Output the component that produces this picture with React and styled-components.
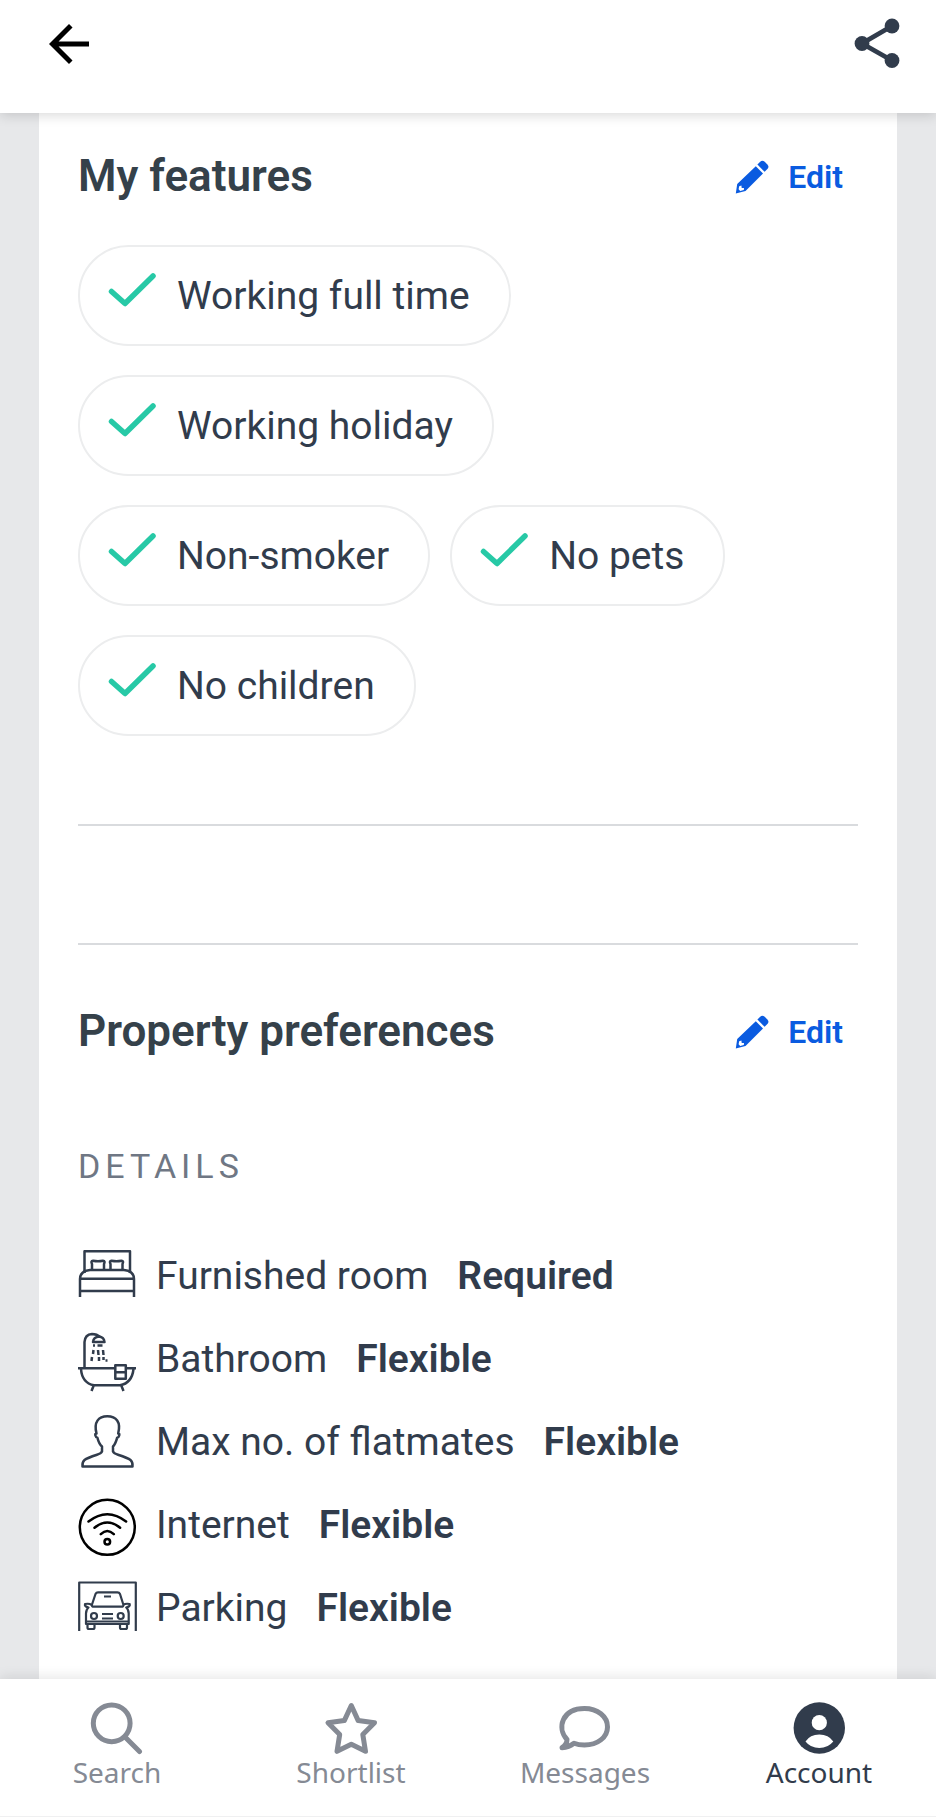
import React from "react";
import styled, { createGlobalStyle } from "styled-components";
import { MdArrowBack } from "react-icons/md";

const color = {
  ink: "#313c4c",
  heading: "#35414a",
  muted: "#6f7784",
  nav: "#858a94",
  link: "#0a5be0",
  check: "#27c9a6",
  line: "#d9dbde",
  pill: "#ecedee",
  gutter: "#e7e8ea",
};

const GlobalStyle = createGlobalStyle`
  *, *::before, *::after { box-sizing: border-box; }
  body {
    margin: 0;
    background: ${color.gutter};
    color: ${color.ink};
    font-family: Roboto, "Liberation Sans", sans-serif;
  }
  h2, h3, ul, dl, dd { margin: 0; padding: 0; }
  ul { list-style: none; }
  svg { display: block; flex: none; }
`;

const Page = styled.div`
  display: flex;
  flex-direction: column;
  min-height: 100vh;
`;

const TopBar = styled.header`
  position: relative;
  z-index: 1;
  display: flex;
  justify-content: space-between;
  align-items: flex-start;
  height: 113px;
  padding: 14px 29px 0 39px;
  background: #fff;
  box-shadow: 0 2px 12px rgba(0, 0, 0, 0.16);
`;

const IconButton = styled.button`
  padding: 0;
  border: 0;
  background: none;
  color: ${(p) => p.$color};
  font-size: 60px;
  cursor: pointer;
`;

const Card = styled.main`
  flex: 1;
  margin: 0 39px;
  padding: 0 39px 37px;
  background: #fff;
`;

const SectionHead = styled.div`
  display: flex;
  justify-content: space-between;
  align-items: center;
  padding: ${(p) => p.$top}px 15px 0 0;
`;

const Heading = styled.h2`
  color: ${color.heading};
  font-size: 44px;
  font-weight: 600;
  line-height: 52px;
`;

const EditButton = styled.button`
  display: flex;
  align-items: center;
  gap: 19px;
  padding: 2px 0 0;
  border: 0;
  background: none;
  color: ${color.link};
  font: 600 32px/50px Roboto, "Liberation Sans", sans-serif;
  cursor: pointer;
`;

const Pills = styled.ul`
  display: flex;
  flex-wrap: wrap;
  gap: 29px 20px;
  max-width: 660px;
  padding: 43px 0 88px;
`;

const Pill = styled.li`
  display: flex;
  align-items: center;
  gap: 19px;
  height: 101px;
  padding: 0 39px 0 28px;
  border: 2px solid ${color.pill};
  border-radius: 51px;
  font-size: 39px;
`;

const Divider = styled.hr`
  height: 2px;
  margin: 0 0 ${(p) => p.$after}px;
  border: 0;
  background: ${color.line};
`;

const Overline = styled.h3`
  padding: 89px 0 63px;
  color: ${color.muted};
  font-size: 34px;
  font-weight: 400;
  line-height: 40px;
  letter-spacing: 5px;
`;

const Details = styled.dl`
  display: flex;
  flex-direction: column;
  gap: 23px;
`;

const Detail = styled.div`
  display: flex;
  align-items: flex-start;
  font-size: 39px;
  line-height: 54px;

  dt { margin: 0 29px 0 18px; }
  dd { font-weight: 600; }
`;

const TabBar = styled.nav`
  position: relative;
  z-index: 1;
  display: grid;
  grid-template-columns: repeat(4, 1fr);
  border-bottom: 1px solid #f0f0f1;
  background: #fff;
  box-shadow: 0 -2px 12px rgba(0, 0, 0, 0.1);
`;

const Tab = styled.a`
  display: flex;
  flex-direction: column;
  align-items: center;
  padding: 22px 0 27px;
  color: ${(p) => (p.$active ? color.ink : color.nav)};
  font-family: "Noto Sans", "DejaVu Sans", sans-serif;
  font-size: 28px;
  line-height: 34px;
  text-decoration: none;
`;

const Line = ({ size = 60, width = 2.5, stroke = "currentColor", children }) => (
  <svg
    width={size}
    height={size}
    viewBox={`0 0 ${size} ${size}`}
    fill="none"
    stroke={stroke}
    strokeWidth={width}
    strokeLinejoin="round"
    aria-hidden="true"
  >
    {children}
  </svg>
);

const ShareIcon = () => (
  <svg width="60" height="60" viewBox="0 0 60 60" fill="currentColor" aria-hidden="true">
    <path d="M45 12 15 29.500 45 46.500" fill="none" stroke="currentColor" strokeWidth="4.800" />
    <circle cx="15" cy="29.500" r="7.400" />
    <circle cx="45" cy="12" r="7.400" />
    <circle cx="45" cy="46.500" r="7.400" />
  </svg>
);

const Pencil = () => (
  <svg width="34" height="34" viewBox="0 0 34 34" fill="currentColor" aria-hidden="true">
    <path d="M22.400 4.600 25.200 1.700q2.200-1.900 4.500.1l2.700 2.600q2 2.200.2 4.400L29.600 11.800Z" />
    <path
      fillRule="evenodd"
      d="M20.800 6.200 28 13.400 10.500 31 .8 33.400 2.200 24ZM4.200 26.200 3.600 29.300 5.200 30.900 8.800 30.100 9 27.900 6.700 28 6.400 25.500Z"
    />
  </svg>
);

const Check = () => (
  <svg width="50" height="50" viewBox="0 0 50 50" fill="none" aria-hidden="true">
    <path
      d="M3.500 20.500 17 32.500 45 5"
      stroke={color.check}
      strokeWidth="5.500"
      strokeLinecap="round"
      strokeLinejoin="round"
    />
  </svg>
);

const BedIcon = () => (
  <Line>
    <path d="M6.500 24V2.200H52V24" />
    <path d="M2 48V30q0-8 10-9h34q10 1 10 9v18M2 29.800h54M2 42h54" />
    <path d="M14 21v-6q-1.500-3 1-3.200 5 1 10 0 2.500.2 1 3.200v6M32.500 21v-6q-1.500-3 1-3.200 5 1 10 0 2.500.2 1 3.200v6" />
  </Line>
);

const BathIcon = () => (
  <Line>
    <path d="M6.500 36V10Q7 2.500 14 2q5 0 8 3" />
    <path d="M15 10q.5-5 6-5.500 5 .5 5.500 5.500Z" />
    <path d="M0 36.300h37M48 36.300h10M3 37q1 14 13 16.300h26Q54 51 55.500 37M15.500 54l-2 5M43.500 54l2 5" />
    <path d="M37.300 33.300h10.500v13.400H37.300ZM37.300 40.300h10.500" />
    <path d="M15 13.500h2M19.500 13.500h5M15.500 18l-.5 4M20 18l.5 5M25 18l.5 5M14 25l-.5 4M21 25v4M25.500 25v3M27.500 28.500h2" />
  </Line>
);

const PersonIcon = () => (
  <Line>
    <path d="M18.500 18.500C15.500 7 20.500 1.300 29.300 1.300S43.200 7 40.200 18.500q1.500-.2 1 2-.5 2-2 2.200Q37.500 29 35 31.500V36.500q1 2 5 3.200 10 3.300 12.500 5.300 2.500 2 2 6.600H4.500Q4 47 6.500 45q2.500-2 12.500-5.300 4-1.200 5-3.200V31.500Q21 29 19.400 22.700q-1.500-.2-2-2.200-.5-2.200 1.100-2Z" />
  </Line>
);

const WifiIcon = () => (
  <Line stroke="#000">
    <circle cx="29.300" cy="29.300" r="27.500" />
    <path
      strokeLinecap="round"
      d="M10.500 23.500q18.800-14.600 37.600 0M16.500 29.700q12.800-10.500 25.600 0M22.800 36.200q6.500-6.400 13 0"
    />
    <circle cx="29.300" cy="43.700" r="2.800" />
  </Line>
);

const CarIcon = () => (
  <Line width={2.2}>
    <path d="M1.200 50V1.500h56.600V50" />
    <path d="M14 23.500 17.500 13q.8-1.700 2.500-1.700h19.500q1.700 0 2.500 1.700l3.300 10.500q.5 2.200-2 2.200H16q-2.700 0-2-2.200ZM26 15.500h7" />
    <path d="M13.500 23.800q-2-1.500-6.500-.8-.8 2.500 3.500 3.500-2.500 2-2.500 6V43h42.700V32.500q0-4-2.500-6 4.300-1 3.500-3.500-4.500-.7-6.200.8M8 40.500h42.700" />
    <circle cx="16" cy="35" r="3" />
    <circle cx="42.700" cy="35" r="3" />
    <path d="M24 33h11M24 37.500h11M9.500 43v3.500q0 1.500 1.500 1.500h4q1.500 0 1.500-1.500V43M42 43v3.500q0 1.500 1.500 1.500h4q1.500 0 1.500-1.500V43" />
  </Line>
);

const SearchIcon = () => (
  <Line size={54} width={5}>
    <circle cx="21.700" cy="22.300" r="18.400" />
    <path strokeLinecap="round" d="M35.500 36.500 49.500 50.500" />
  </Line>
);

const StarIcon = () => (
  <Line size={54} width={5}>
    <path d="M27.300 4.500 34.200 19.600 50.500 21.700 38.800 33.500 41.500 50.300 27.300 43.200 13 50.300 15.700 33.500 4 21.700 20.300 19.600Z" />
  </Line>
);

const ChatIcon = () => (
  <Line size={54} width={5}>
    <path d="M9 38.500C-1.500 27 4 7.500 26.500 7.500c13 0 23 8 23 18.400S39.500 44 26.500 44q-6 0-10.500-1.800-5 4-12 4.500Q9 43.500 9 38.500Z" />
  </Line>
);

const AccountIcon = () => (
  <svg width="54" height="54" viewBox="0 0 54 54" aria-hidden="true">
    <circle cx="27.300" cy="27" r="25.700" fill="currentColor" />
    <circle cx="27.300" cy="21.700" r="7.600" fill="#fff" />
    <path d="M13.500 40.500Q18 33.500 27.300 33.500t14 7Q36 47 27.300 47t-13.800-6.500Z" fill="#fff" />
  </svg>
);

const features = ["Working full time", "Working holiday", "Non-smoker", "No pets", "No children"];

const details = [
  [BedIcon, "Furnished room", "Required"],
  [BathIcon, "Bathroom", "Flexible"],
  [PersonIcon, "Max no. of flatmates", "Flexible"],
  [WifiIcon, "Internet", "Flexible"],
  [CarIcon, "Parking", "Flexible"],
];

const tabs = [
  [SearchIcon, "Search"],
  [StarIcon, "Shortlist"],
  [ChatIcon, "Messages"],
  [AccountIcon, "Account"],
];

const SectionTitle = ({ top, children }) => (
  <SectionHead $top={top}>
    <Heading>{children}</Heading>
    <EditButton type="button">
      <Pencil />
      Edit
    </EditButton>
  </SectionHead>
);

export default function App() {
  return (
    <Page>
      <GlobalStyle />
      <TopBar>
        <IconButton type="button" aria-label="Back" $color="#000">
          <MdArrowBack />
        </IconButton>
        <IconButton type="button" aria-label="Share" $color={color.ink}>
          <ShareIcon />
        </IconButton>
      </TopBar>
      <Card>
        <SectionTitle top={37}>My features</SectionTitle>
        <Pills>
          {features.map((name) => (
            <Pill key={name}>
              <Check />
              {name}
            </Pill>
          ))}
        </Pills>
        <Divider $after={117} />
        <Divider $after={0} />
        <SectionTitle top={60}>Property preferences</SectionTitle>
        <Overline>DETAILS</Overline>
        <Details>
          {details.map(([Icon, label, value]) => (
            <Detail key={label}>
              <Icon />
              <dt>{label}</dt>
              <dd>{value}</dd>
            </Detail>
          ))}
        </Details>
      </Card>
      <TabBar>
        {tabs.map(([Icon, label]) => (
          <Tab key={label} href={`#${label.toLowerCase()}`} $active={label === "Account"}>
            <Icon />
            {label}
          </Tab>
        ))}
      </TabBar>
    </Page>
  );
}
